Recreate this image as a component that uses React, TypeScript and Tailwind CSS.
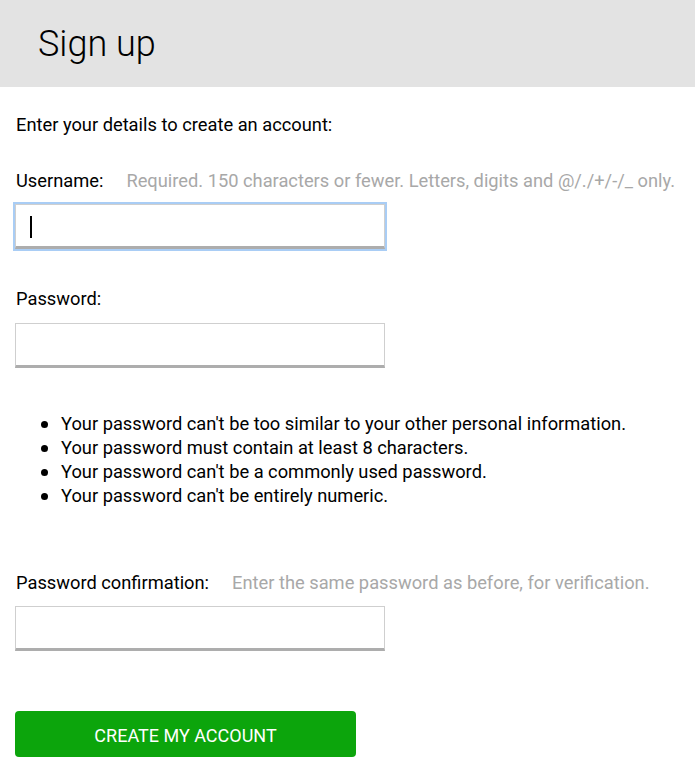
import React from "react"

const helpers = [
  "Your password can't be too similar to your other personal information.",
  "Your password must contain at least 8 characters.",
  "Your password can't be a commonly used password.",
  "Your password can't be entirely numeric.",
]

function Field({ focused = false }: { focused?: boolean }) {
  return (
    <div className="relative w-[370px]">
      <input
        type="text"
        className={
          "block w-full h-[45px] bg-white border border-[#cfcfcf] border-b-[3px] border-b-[#adadad] outline-none px-3 " +
          (focused ? "ring-2 ring-[#a9cdf5]" : "")
        }
      />
      {focused && <span className="absolute left-[15px] top-[12px] w-[2px] h-[22px] bg-black" />}
    </div>
  )
}

export default function App() {
  return (
    <div className="min-h-screen bg-white text-black font-['Roboto',sans-serif]">
      <header className="h-[87px] bg-[#e3e3e3] flex items-center pl-[38px]">
        <h1 className="text-[36px] font-light">Sign up</h1>
      </header>

      <main className="px-[16px] text-[18.3px] leading-[24px]">
        <p className="mt-[26px]">Enter your details to create an account:</p>

        <div className="mt-[32px] flex gap-[23px]">
          <label>Username:</label>
          <span className="text-[#a8a8a8]">Required. 150 characters or fewer. Letters, digits and @/./+/-/_ only.</span>
        </div>
        <div className="mt-[11px] -ml-px">
          <Field focused />
        </div>

        <label className="block mt-[38px]">Password:</label>
        <div className="mt-[12px] -ml-px">
          <Field />
        </div>

        <ul className="mt-[44px] pl-[25px]">
          {helpers.map((h) => (
            <li key={h} className="flex items-center gap-[13px]">
              <span className="w-[7px] h-[7px] rounded-full bg-black shrink-0" />
              {h}
            </li>
          ))}
        </ul>

        <div className="mt-[63px] flex gap-[23px]">
          <label>Password confirmation:</label>
          <span className="text-[#a8a8a8]">Enter the same password as before, for verification.</span>
        </div>
        <div className="mt-[11px] -ml-px">
          <Field />
        </div>

        <button className="mt-[60px] -ml-px w-[341px] h-[46px] pt-[3px] rounded-[4px] bg-[#0ca50c] text-white text-[18px] uppercase">
          Create my account
        </button>
      </main>
    </div>
  )
}
